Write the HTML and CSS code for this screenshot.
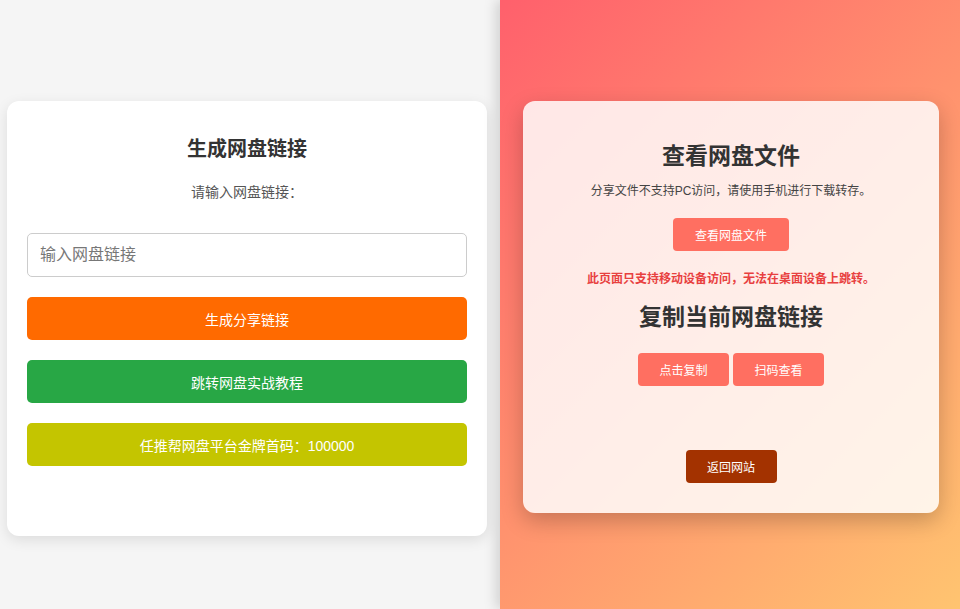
FILE: index.html
```html
<!DOCTYPE html>
<html lang="zh-CN">
<head>
<meta charset="utf-8">
<title>网盘链接</title>
<link rel="stylesheet" href="styles.css">
</head>
<body>
<div class="page">
  <section class="left">
    <div class="card">
      <h2 class="card-title">生成网盘链接</h2>
      <p class="label">请输入网盘链接：</p>
      <input class="link-input" type="text" placeholder="输入网盘链接">
      <button class="btn btn-orange">生成分享链接</button>
      <button class="btn btn-green">跳转网盘实战教程</button>
      <button class="btn btn-olive">任推帮网盘平台金牌首码：100000</button>
    </div>
  </section>
  <section class="right">
    <div class="panel">
      <h2 class="panel-title">查看网盘文件</h2>
      <p class="note">分享文件不支持PC访问，请使用手机进行下载转存。</p>
      <div class="row">
        <button class="sbtn sbtn-coral">查看网盘文件</button>
      </div>
      <p class="warn">此页面只支持移动设备访问，无法在桌面设备上跳转。</p>
      <h2 class="panel-title second">复制当前网盘链接</h2>
      <div class="row pair">
        <button class="sbtn sbtn-coral wide">点击复制</button>
        <button class="sbtn sbtn-coral wide">扫码查看</button>
      </div>
      <div class="row back">
        <button class="sbtn sbtn-brown wide">返回网站</button>
      </div>
    </div>
  </section>
</div>
</body>
</html>
```

FILE: styles.css
```css
* { box-sizing: border-box; }
html, body { margin: 0; padding: 0; }
body {
  font-family: "Liberation Sans", "Noto Sans CJK SC", sans-serif;
  width: 960px;
  height: 609px;
  overflow: hidden;
}
.page {
  display: flex;
  height: 609px;
}
.left {
  width: 500px;
  background: #f5f5f5;
  padding: 101px 0 0 7px;
}
.card {
  width: 480px;
  height: 435px;
  background: #fff;
  border-radius: 12px;
  box-shadow: 0 4px 14px rgba(0,0,0,0.1);
  padding: 0 20px;
  display: flex;
  flex-direction: column;
  align-items: center;
}
.card-title {
  margin: 34px 0 0;
  font-size: 20px;
  line-height: 28px;
  font-weight: bold;
  color: #333;
}
.label {
  margin: 19px 0 0;
  font-size: 14px;
  line-height: 20px;
  color: #555;
}
.link-input {
  margin-top: 31px;
  width: 440px;
  height: 44px;
  border: 1px solid #ccc;
  border-radius: 5px;
  padding: 0 12px;
  font-family: inherit;
  font-size: 16px;
  color: #333;
  outline: none;
}
.link-input::placeholder { color: #777; }
.btn {
  margin-top: 20px;
  width: 440px;
  height: 43px;
  border: none;
  border-radius: 5px;
  color: #fff;
  font-family: inherit;
  font-size: 14px;
  cursor: pointer;
}
.btn-orange { background: #ff6a00; }
.btn-green { background: #28a745; }
.btn-olive { background: #c4c500; }

.right {
  flex: 1;
  background: linear-gradient(135deg, #ff606c 0%, #ffc470 100%);
  box-shadow: -4px 0 12px rgba(0,0,0,0.15);
  padding: 101px 0 0 23px;
  position: relative;
}
.panel {
  width: 416px;
  height: 412px;
  background: rgba(255,255,255,0.84);
  border-radius: 12px;
  box-shadow: 0 8px 22px rgba(0,0,0,0.22);
  display: flex;
  flex-direction: column;
  align-items: center;
  padding: 0 20px;
}
.panel-title {
  margin: 40px 0 0;
  font-size: 23px;
  line-height: 31px;
  font-weight: bold;
  color: #333;
}
.panel-title.second { margin-top: 14px; }
.note {
  margin: 10px 0 0;
  font-size: 12px;
  line-height: 18px;
  color: #444;
}
.row {
  display: flex;
  gap: 4px;
  justify-content: center;
  margin-top: 18px;
}
.pair { margin-top: 20px; }
.back { margin-top: 64px; }
.sbtn {
  height: 33px;
  border: none;
  border-radius: 4px;
  color: #fff;
  font-family: inherit;
  font-size: 12px;
  padding: 0 22px;
  cursor: pointer;
}
.sbtn.wide { width: 91px; padding: 0; }
.sbtn-coral { background: #ff6f61; width: 116px; }
.sbtn-brown { background: #a33200; width: 92px; }
.warn {
  margin: 19px 0 0;
  font-size: 12px;
  line-height: 18px;
  font-weight: bold;
  color: #e8403f;
}
```
